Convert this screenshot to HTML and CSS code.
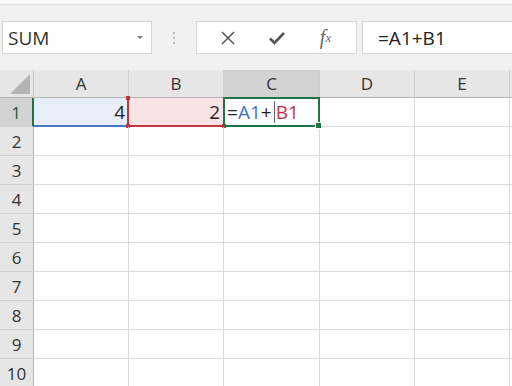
FILE: index.html
```html
<!DOCTYPE html>
<html lang="en">
<head>
  <meta charset="UTF-8">
  <title>Formula</title>
  <link rel="stylesheet" href="styles.css">
</head>
<body>

  <!-- Barra de fórmulas -->
  <div class="ribbon-edge"></div>
  <div class="formula-bar">
    <div class="name-box">
      <span class="name-text">SUM</span>
      <span class="name-arrow"></span>
    </div>
    <div class="grip">
      <span></span><span></span><span></span>
    </div>
    <div class="button-box">
      <span class="fbtn">
        <svg width="16" height="16" viewBox="0 0 16 16"><path d="M2 2 L14 14 M14 2 L2 14" stroke="#555" stroke-width="1.5" fill="none"/></svg>
      </span>
      <span class="fbtn">
        <svg width="18" height="16" viewBox="0 0 18 16"><path d="M2 8.5 L6.5 13 L16 3" stroke="#555" stroke-width="2.6" fill="none"/></svg>
      </span>
      <span class="fbtn fx"><i>f</i><sub>x</sub></span>
    </div>
    <div class="formula-box">=A1+B1</div>
  </div>

  <!-- Hoja -->
  <div class="sheet">
    <div class="corner"><span class="corner-tri"></span></div>
    <div class="col-head">A</div>
    <div class="col-head">B</div>
    <div class="col-head active">C</div>
    <div class="col-head">D</div>
    <div class="col-head">E</div>
    <div class="col-head last"></div>

    <div class="row-head active">1</div>
    <div class="cell ref-blue">4</div>
    <div class="cell ref-red">2<span class="handle h-tl"></span><span class="handle h-bl"></span><span class="handle h-br"></span></div>
    <div class="cell editing"><span>=</span><span class="c-blue">A1</span><span>+</span><span class="caret"></span><span class="c-red">B1</span><span class="fill-handle"></span></div>
    <div class="cell"></div>
    <div class="cell"></div>
    <div class="cell last"></div>
  </div>

  <script>
    // Filas vacías 2..10
    const sheet = document.querySelector('.sheet');
    for (let r = 2; r <= 10; r++) {
      const head = document.createElement('div');
      head.className = 'row-head';
      head.textContent = r;
      sheet.appendChild(head);
      for (let c = 0; c < 6; c++) {
        const cell = document.createElement('div');
        cell.className = c === 5 ? 'cell last' : 'cell';
        sheet.appendChild(cell);
      }
    }
  </script>

</body>
</html>
```

FILE: styles.css
```css
body {
  margin: 0;
  padding: 0;
  width: 512px;
  height: 386px;
  overflow: hidden;
  background-color: #f1f1f1;
  font-family: "Open Sans", "Noto Sans", sans-serif;
  color: #222;
}

.ribbon-edge {
  height: 4px;
  background: #f9f9f9;
  border-bottom: 1px solid #e4e4e4;
}

/* Barra de fórmulas */
.formula-bar {
  display: flex;
  align-items: center;
  height: 65px;
  padding-left: 2px;
  box-sizing: border-box;
}

.name-box,
.button-box,
.formula-box {
  height: 33px;
  background: #fff;
  border: 1px solid #d6d6d6;
  box-sizing: border-box;
  display: flex;
  align-items: center;
}

.name-box {
  width: 150px;
  padding: 0 8px 0 5px;
  justify-content: space-between;
}

.name-text {
  font-size: 19px;
  color: #333;
}

.name-arrow {
  width: 0;
  height: 0;
  border-left: 3px solid transparent;
  border-right: 3px solid transparent;
  border-top: 3px solid #777;
}

.grip {
  width: 44px;
  display: flex;
  flex-direction: column;
  align-items: center;
  gap: 3px;
}

.grip span {
  width: 2px;
  height: 2px;
  background: #b8b8b8;
}

.button-box {
  width: 161px;
  justify-content: space-around;
  padding: 0 6px;
}

.fbtn {
  width: 30px;
  display: flex;
  justify-content: center;
  align-items: center;
}

.fx {
  font-family: "Liberation Serif", serif;
  font-size: 20px;
  color: #666;
}

.fx sub {
  font-size: 13px;
  font-style: italic;
  vertical-align: -1px;
}

.formula-box {
  flex: 1;
  margin-left: 5px;
  padding-left: 15px;
  font-size: 19px;
  color: #222;
  border-right: none;
}

/* Hoja */
.sheet {
  display: grid;
  grid-template-columns: 34px 95px 95px 96px 95px 95px 2px;
  grid-template-rows: 28px repeat(10, 29px);
  background: #fff;
}

.corner {
  background: #e6e6e6;
  border-right: 1px solid #c8c8c8;
  border-bottom: 1px solid #b5b5b5;
  position: relative;
}

.corner-tri {
  position: absolute;
  right: 3px;
  bottom: 3px;
  width: 0;
  height: 0;
  border-left: 20px solid transparent;
  border-bottom: 20px solid #b4b4b4;
}

.col-head {
  background: #e6e6e6;
  border-right: 1px solid #cfcfcf;
  border-bottom: 1px solid #b5b5b5;
  display: flex;
  align-items: center;
  justify-content: center;
  font-size: 17px;
  color: #333;
}

.col-head.active {
  background: #d2d2d2;
  color: #333;
}

.col-head.last {
  border-right: none;
}

.row-head {
  background: #e6e6e6;
  border-right: 1px solid #b5b5b5;
  border-bottom: 1px solid #d0d0d0;
  display: flex;
  align-items: center;
  justify-content: center;
  font-size: 17px;
  color: #333;
}

.row-head.active {
  background: #d2d2d2;
  color: #1d5b38;
  border-right: 2px solid #217346;
}

.cell {
  border-right: 1px solid #dadada;
  border-bottom: 1px solid #dadada;
  position: relative;
  font-size: 19px;
  display: flex;
  align-items: center;
  justify-content: flex-end;
  padding: 0 3px;
}

.cell.last {
  border-right: none;
  padding: 0;
}

.ref-blue {
  background: #e8eef9;
  border-bottom: 2px solid #4a78c0;
}

.ref-red {
  background: #fbe4e5;
  border-left: 2px solid #c2363f;
  border-bottom: 2px solid #c2363f;
  margin-left: -2px;
}

.handle {
  position: absolute;
  width: 4px;
  height: 4px;
  background: #c2363f;
}

.h-tl { left: -3px; top: -2px; }
.h-bl { left: -3px; bottom: -3px; }
.h-br { right: -3px; bottom: -3px; }

.editing {
  justify-content: flex-start;
  border: 2px solid #217346;
  margin: -1px 0 0 -1px;
  padding-left: 2px;
  color: #222;
  z-index: 2;
}

.c-blue { color: #4472c4; }
.c-red { color: #c0363e; }

.caret {
  width: 1px;
  height: 22px;
  background: #666;
  margin: 0 1px 0 2px;
}

.fill-handle {
  position: absolute;
  right: -4px;
  bottom: -4px;
  width: 5px;
  height: 5px;
  background: #217346;
  border: 1px solid #fff;
}
```
